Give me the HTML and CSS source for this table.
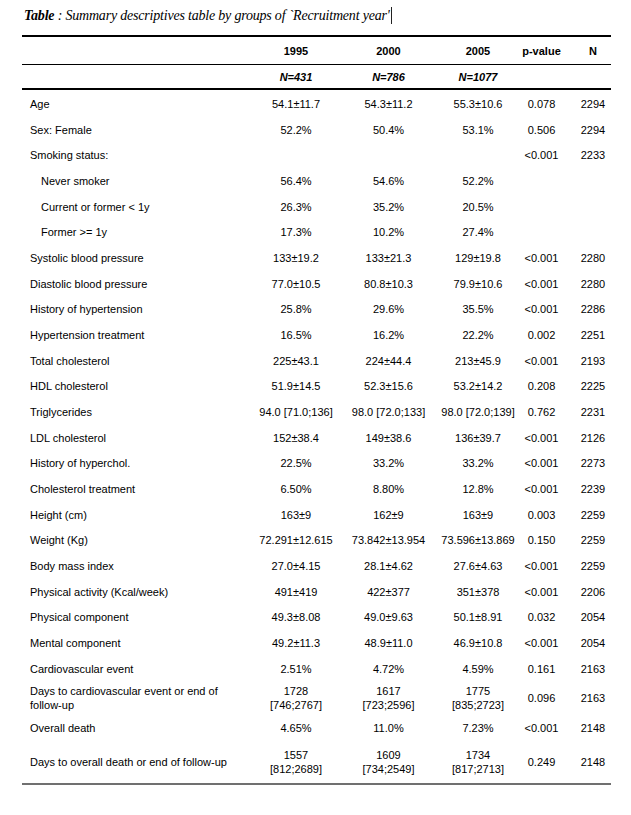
FILE: index.html
```html
<!DOCTYPE html>
<html>
<head>
<meta charset="utf-8">
<link rel="stylesheet" href="styles.css">
</head>
<body>
<div class="page">
  <h1 class="title"><b>Table</b> : Summary descriptives table by groups of `Recruitment year'<span class="caret"></span></h1>
  <div class="tbl">
    <div class="row head">
      <span class="lab"></span><span class="c">1995</span><span class="c">2000</span><span class="c">2005</span><span class="c">p-value</span><span class="c">N</span>
    </div>
    <div class="row sub">
      <span class="lab"></span><span class="c">N=431</span><span class="c">N=786</span><span class="c">N=1077</span><span class="c"></span><span class="c"></span>
    </div>
    <div class="body">
      <div class="row"><span class="lab">Age</span><span class="c">54.1±11.7</span><span class="c">54.3±11.2</span><span class="c">55.3±10.6</span><span class="c">0.078</span><span class="c">2294</span></div>
      <div class="row"><span class="lab">Sex: Female</span><span class="c">52.2%</span><span class="c">50.4%</span><span class="c">53.1%</span><span class="c">0.506</span><span class="c">2294</span></div>
      <div class="row"><span class="lab">Smoking status:</span><span class="c"></span><span class="c"></span><span class="c"></span><span class="c">&lt;0.001</span><span class="c">2233</span></div>
      <div class="row"><span class="lab ind">Never smoker</span><span class="c">56.4%</span><span class="c">54.6%</span><span class="c">52.2%</span><span class="c"></span><span class="c"></span></div>
      <div class="row"><span class="lab ind">Current or former &lt; 1y</span><span class="c">26.3%</span><span class="c">35.2%</span><span class="c">20.5%</span><span class="c"></span><span class="c"></span></div>
      <div class="row"><span class="lab ind">Former &gt;= 1y</span><span class="c">17.3%</span><span class="c">10.2%</span><span class="c">27.4%</span><span class="c"></span><span class="c"></span></div>
      <div class="row"><span class="lab">Systolic blood pressure</span><span class="c">133±19.2</span><span class="c">133±21.3</span><span class="c">129±19.8</span><span class="c">&lt;0.001</span><span class="c">2280</span></div>
      <div class="row"><span class="lab">Diastolic blood pressure</span><span class="c">77.0±10.5</span><span class="c">80.8±10.3</span><span class="c">79.9±10.6</span><span class="c">&lt;0.001</span><span class="c">2280</span></div>
      <div class="row"><span class="lab">History of hypertension</span><span class="c">25.8%</span><span class="c">29.6%</span><span class="c">35.5%</span><span class="c">&lt;0.001</span><span class="c">2286</span></div>
      <div class="row"><span class="lab">Hypertension treatment</span><span class="c">16.5%</span><span class="c">16.2%</span><span class="c">22.2%</span><span class="c">0.002</span><span class="c">2251</span></div>
      <div class="row"><span class="lab">Total cholesterol</span><span class="c">225±43.1</span><span class="c">224±44.4</span><span class="c">213±45.9</span><span class="c">&lt;0.001</span><span class="c">2193</span></div>
      <div class="row"><span class="lab">HDL cholesterol</span><span class="c">51.9±14.5</span><span class="c">52.3±15.6</span><span class="c">53.2±14.2</span><span class="c">0.208</span><span class="c">2225</span></div>
      <div class="row"><span class="lab">Triglycerides</span><span class="c">94.0 [71.0;136]</span><span class="c">98.0 [72.0;133]</span><span class="c">98.0 [72.0;139]</span><span class="c">0.762</span><span class="c">2231</span></div>
      <div class="row"><span class="lab">LDL cholesterol</span><span class="c">152±38.4</span><span class="c">149±38.6</span><span class="c">136±39.7</span><span class="c">&lt;0.001</span><span class="c">2126</span></div>
      <div class="row"><span class="lab">History of hyperchol.</span><span class="c">22.5%</span><span class="c">33.2%</span><span class="c">33.2%</span><span class="c">&lt;0.001</span><span class="c">2273</span></div>
      <div class="row"><span class="lab">Cholesterol treatment</span><span class="c">6.50%</span><span class="c">8.80%</span><span class="c">12.8%</span><span class="c">&lt;0.001</span><span class="c">2239</span></div>
      <div class="row"><span class="lab">Height (cm)</span><span class="c">163±9</span><span class="c">162±9</span><span class="c">163±9</span><span class="c">0.003</span><span class="c">2259</span></div>
      <div class="row"><span class="lab">Weight (Kg)</span><span class="c">72.291±12.615</span><span class="c">73.842±13.954</span><span class="c">73.596±13.869</span><span class="c">0.150</span><span class="c">2259</span></div>
      <div class="row"><span class="lab">Body mass index</span><span class="c">27.0±4.15</span><span class="c">28.1±4.62</span><span class="c">27.6±4.63</span><span class="c">&lt;0.001</span><span class="c">2259</span></div>
      <div class="row"><span class="lab">Physical activity (Kcal/week)</span><span class="c">491±419</span><span class="c">422±377</span><span class="c">351±378</span><span class="c">&lt;0.001</span><span class="c">2206</span></div>
      <div class="row"><span class="lab">Physical component</span><span class="c">49.3±8.08</span><span class="c">49.0±9.63</span><span class="c">50.1±8.91</span><span class="c">0.032</span><span class="c">2054</span></div>
      <div class="row"><span class="lab">Mental component</span><span class="c">49.2±11.3</span><span class="c">48.9±11.0</span><span class="c">46.9±10.8</span><span class="c">&lt;0.001</span><span class="c">2054</span></div>
      <div class="row"><span class="lab">Cardiovascular event</span><span class="c">2.51%</span><span class="c">4.72%</span><span class="c">4.59%</span><span class="c">0.161</span><span class="c">2163</span></div>
      <div class="row"><span class="lab">Days to cardiovascular event or end of follow-up</span><span class="c">1728<br>[746;2767]</span><span class="c">1617<br>[723;2596]</span><span class="c">1775<br>[835;2723]</span><span class="c">0.096</span><span class="c">2163</span></div>
      <div class="row"><span class="lab">Overall death</span><span class="c">4.65%</span><span class="c">11.0%</span><span class="c">7.23%</span><span class="c">&lt;0.001</span><span class="c">2148</span></div>
      <div class="row last"><span class="lab">Days to overall death or end of follow-up</span><span class="c">1557<br>[812;2689]</span><span class="c">1609<br>[734;2549]</span><span class="c">1734<br>[817;2713]</span><span class="c">0.249</span><span class="c">2148</span></div>
    </div>
  </div>
</div>
</body>
</html>
```
FILE: styles.css
```css
html, body {
  margin: 0;
  padding: 0;
  background: #fff;
}
.page {
  width: 631px;
  padding: 6px 20px 0 22px;
  box-sizing: border-box;
  color: #000;
}
.title {
  margin: 0 0 9px 2px;
  font-family: "Liberation Serif", serif;
  font-style: italic;
  font-weight: normal;
  font-size: 14px;
  letter-spacing: -0.2px;
  line-height: 20px;
  white-space: nowrap;
}
.title b {
  font-weight: bold;
}
.caret {
  display: inline-block;
  width: 0;
  height: 17px;
  border-left: 1px solid #222;
  vertical-align: -4px;
  margin-left: 1px;
}
.tbl {
  width: 589px;
  border-top: 2px solid #000;
  font-family: "Liberation Sans", Arial, sans-serif;
  font-size: 11px;
  line-height: 14px;
}
.row {
  display: grid;
  grid-template-columns: 241px 66px 119px 60px 67px 36px;
  align-items: center;
  justify-items: center;
  min-height: 25.68px;
  padding: 3px 0;
  box-sizing: border-box;
}
.row .lab {
  justify-self: stretch;
  padding: 0 28px 0 8px;
}
.row .lab.ind {
  padding-left: 19px;
}
.row .c {
  white-space: nowrap;
  text-align: center;
}
.head {
  height: 28px;
  min-height: 0;
  font-weight: bold;
  border-bottom: 1px solid #000;
}
.sub {
  height: 25px;
  min-height: 0;
  font-weight: bold;
  font-style: italic;
  border-bottom: 2px solid #000;
}
.head, .sub {
  padding: 0;
}
.row.last {
  min-height: 42px;
}
.body {
  padding: 1px 0 0;
  border-bottom: 2px solid #707070;
}
```
